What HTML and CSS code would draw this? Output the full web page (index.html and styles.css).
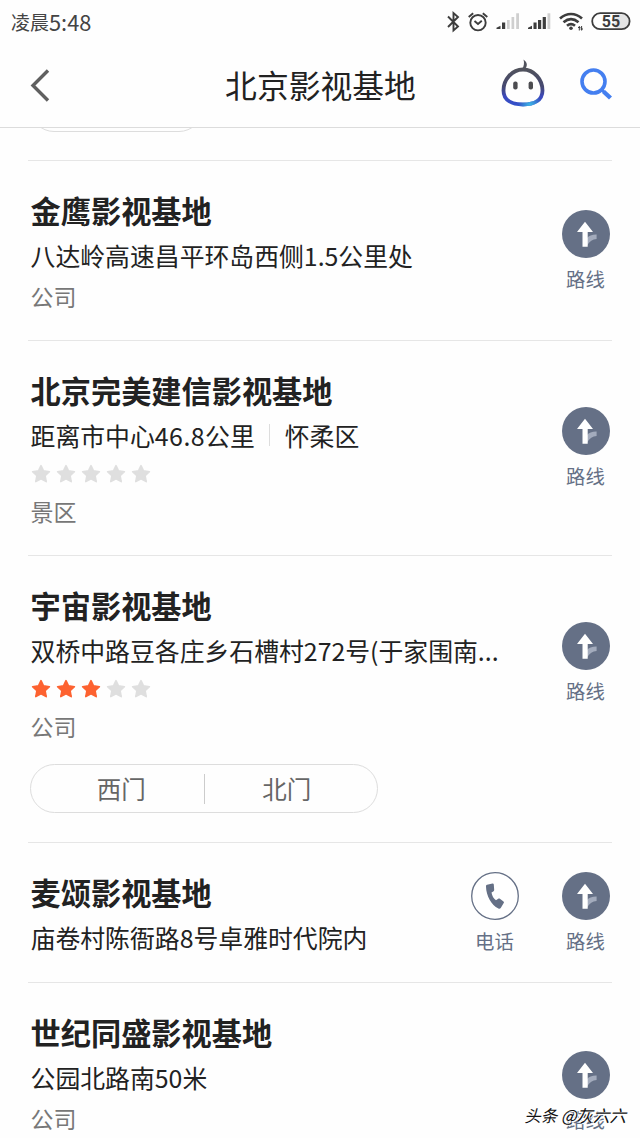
FILE: index.html
```
<!DOCTYPE html>
<html lang="zh-CN">
<head>
<meta charset="utf-8">
<title>北京影视基地</title>
<link rel="stylesheet" href="styles.css">
</head>
<body>
<svg class="defs" width="0" height="0" aria-hidden="true">
  <symbol id="star" viewBox="0 0 20 20"><path d="M10 1.600l2.500 5.300 5.900.8-4.300 4 1.100 5.900L10 14.800l-5.200 2.800 1.100-5.900-4.300-4 5.900-.8z" fill="currentColor" stroke="currentColor" stroke-width="1.600" stroke-linejoin="round"/></symbol>
  <symbol id="route" viewBox="0 0 48 48"><circle cx="24" cy="24" r="24" fill="#657086"/><path d="M25 35.500v-7.500c2-2.200 5-3.600 9.600-3.500v4.600c-4 .1-7 2.200-9.600 6.400z" fill="#a3abbc"/><path d="M23 11.700l8 10.200h-5.300v14.900h-5.200V21.900H15z" fill="#fff"/></symbol>
</svg>
<div class="screen">
  <div class="status">
    <span class="time">凌晨<span class="digits">5:48</span></span>
    <svg class="status-icons" width="190" height="30" viewBox="0 0 190 30" fill="none" stroke="#3d3d3d">
      <path d="M7 16.500l10 10-4.500 4V13l4.500 4-10 10" stroke-width="1.900"/>
      <circle cx="37" cy="22.700" r="7.700" stroke-width="1.900"/>
      <path d="M33.500 21l3.500 3 3.800-3.200M27.700 17l4.500-3.700M41.800 13.300l4.500 3.700" stroke-width="1.900"/>
      <g stroke="none" fill="#3d3d3d">
        <path d="M55.500 27.800l4-2v3.200h-4zM61 22.500h3.200v6.500H61z"/>
        <path d="M66 20h2.700v9H66zM70.500 17h2.700v12h-2.700zM75.200 13.300h2.800V29h-2.800z" fill="#cfcfcf"/>
        <path d="M87 27.800l4-2v3.200h-4zM92.500 22.500h3.100v6.500h-3.100zM97 20h3.200v9H97zM101.700 17h3.200v12h-3.200z"/>
        <path d="M106.500 13.300h2.800V29h-2.800z" fill="#cfcfcf"/>
      </g>
      <path d="M119 18.500c6.800-6 15.200-6 22 0M122.500 22.300c4.800-4 10.200-4 15 0M126 25.800c2.700-2.200 5.300-2.200 8 0" stroke-width="2.700"/>
      <circle cx="130" cy="28.300" r="1.800" fill="#3d3d3d" stroke="none"/>
      <path d="M138.300 26v4.500M140.600 26v4.500M137 27.500h2.500M139.500 29h2.500" stroke-width="1"/>
      <path d="M174 14.200h7a7.200 7.200 0 0 1 0 14.400h-7z" fill="#e4e4e4" stroke="none"/>
      <rect x="151.200" y="13.200" width="37.400" height="16" rx="8" stroke-width="1.800"/>
      <text x="170" y="27" text-anchor="middle" class="battery">55</text>
    </svg>
  </div>
  <header class="header">
    <svg class="back" width="24" height="36" viewBox="0 0 24 36" fill="none" stroke="#606060" stroke-width="3.400"><path d="M20 4.500L5 19.500l15 15"/></svg>
    <h1 class="heading">北京影视基地</h1>
    <div class="tools">
      <svg width="46" height="50" viewBox="0 0 46 50" fill="none">
        <defs><linearGradient id="face" x1="0" y1="0" x2="0" y2="1"><stop offset="0" stop-color="#50525c"/><stop offset=".5" stop-color="#454872"/><stop offset=".78" stop-color="#3c48bd"/><stop offset="1" stop-color="#3350c8"/></linearGradient>
        <radialGradient id="glow" cx="30" cy="46" r="12" gradientUnits="userSpaceOnUse"><stop offset="0" stop-color="#3cb7e6"/><stop offset="1" stop-color="#3cb7e6" stop-opacity="0"/></radialGradient></defs>
        <path d="M23 10.500C12 10.500 3.500 20.500 3.500 31.500 3.500 41.500 12 45.500 23 45.500S42.500 41.500 42.500 31.500C42.500 20.500 34 10.500 23 10.500z" stroke="url(#face)" stroke-width="3.800"/>
        <path d="M23 10.500C12 10.500 3.500 20.500 3.500 31.500 3.500 41.500 12 45.500 23 45.500S42.500 41.500 42.500 31.500C42.500 20.500 34 10.500 23 10.500z" stroke="url(#glow)" stroke-width="3.800"/>
        <path d="M23.500.500c4 3 4.500 6.500 1 10h-2.500c2-3.500 2.500-6.500 1.500-10z" fill="#50525c"/>
        <rect x="13.200" y="22.500" width="4.400" height="8" rx="2" fill="#4c4c50"/><rect x="28.600" y="22.500" width="4.400" height="8" rx="2" fill="#4c4c50"/>
      </svg>
      <svg width="34" height="34" viewBox="0 0 34 34" fill="none" stroke="#447ff0"><circle cx="14.500" cy="14.500" r="11.500" stroke-width="3.600"/><path d="M22.500 22.500l3 3" stroke-width="3"/><path d="M24.500 24.500l7 6.500" stroke-width="4.400"/></svg>
    </div>
  </header>
  <main class="list">
    <div class="previous"><div class="gate-end"></div></div>
    <section class="row">
      <div class="main">
        <div class="info"><h2 class="name">金鹰影视基地</h2><p class="address">八达岭高速昌平环岛西侧1.5公里处</p><p class="category">公司</p></div>
        <div class="actions"><div class="action"><svg class="circle"><use href="#route"/></svg><span class="label">路线</span></div></div>
      </div>
    </section>
    <section class="row rated">
      <div class="main">
        <div class="info"><h2 class="name">北京完美建信影视基地</h2><p class="address">距离市中心<span class="km">46.8</span>公里<span class="divider"></span>怀柔区</p>
          <div class="stars"><svg><use href="#star"/></svg><svg><use href="#star"/></svg><svg><use href="#star"/></svg><svg><use href="#star"/></svg><svg><use href="#star"/></svg></div>
          <p class="category">景区</p></div>
        <div class="actions"><div class="action"><svg class="circle"><use href="#route"/></svg><span class="label">路线</span></div></div>
      </div>
    </section>
    <section class="row rated with-gates">
      <div class="main">
        <div class="info"><h2 class="name">宇宙影视基地</h2><p class="address">双桥中路豆各庄乡石槽村272号(于家围南...</p>
          <div class="stars"><svg class="on"><use href="#star"/></svg><svg class="on"><use href="#star"/></svg><svg class="on"><use href="#star"/></svg><svg><use href="#star"/></svg><svg><use href="#star"/></svg></div>
          <p class="category">公司</p></div>
        <div class="actions"><div class="action"><svg class="circle"><use href="#route"/></svg><span class="label">路线</span></div></div>
      </div>
      <div class="gates"><span class="gate">西门</span><span class="gate">北门</span></div>
    </section>
    <section class="row brief">
      <div class="main">
        <div class="info"><h2 class="name">麦颂影视基地</h2><p class="address">庙卷村陈衙路8号卓雅时代院内</p></div>
        <div class="actions">
          <div class="action"><svg class="circle" viewBox="0 0 48 48"><circle cx="24" cy="24" r="23.300" fill="#fff" stroke="#657086" stroke-width="1.300"/><path d="M16 12.700l5.500-1.300c.8-.1 1.200.3 1.300 1l.4 5.600c0 .7-.3 1.100-.9 1.400l-1.800 1c.5 3.400 2 5.800 4.500 7.800l2.200-1.500c.6-.4 1.100-.4 1.700 0l3.600 2.800c.6.5.6 1 .2 1.600l-2.800 4.600c-.7 1-1.500 1.200-2.500.7C20.300 33 15.300 24 15 14.700c0-1 .1-1.700 1-2z" fill="#657086"/></svg><span class="label">电话</span></div>
          <div class="action"><svg class="circle"><use href="#route"/></svg><span class="label">路线</span></div>
        </div>
      </div>
    </section>
    <section class="row last">
      <div class="main">
        <div class="info"><h2 class="name">世纪同盛影视基地</h2><p class="address">公园北路南50米</p><p class="category">公司</p></div>
        <div class="actions"><div class="action"><svg class="circle"><use href="#route"/></svg><span class="label">路线</span></div></div>
      </div>
    </section>
  </main>
  <div class="watermark">头条 @灰六六</div>
</div>
</body>
</html>
```
FILE: styles.css
```
* { box-sizing: border-box; margin: 0; padding: 0; }
body { background: #fff; font-family: "Noto Sans CJK SC", sans-serif; color: #222; }
svg { display: block; flex: none; }
.defs { position: absolute; }
.screen { position: relative; width: 640px; height: 1138px; overflow: hidden; display: flex; flex-direction: column; background: #fefefe; }
.status { height: 42px; flex: none; padding: 0 9px 0 11px; display: flex; justify-content: space-between; align-items: flex-start; }
.time { display: flex; font-size: 19px; line-height: 43px; color: #444; white-space: nowrap; }
.digits { font-size: 21.800px; }
.status-icons { overflow: visible; }
.battery { font: bold 16px Roboto, sans-serif; fill: #3d3d3d; stroke: none; }
.header { height: 86px; flex: none; border-bottom: 1px solid #dcdcdc; padding: 0 27px 1px 28px; display: grid; grid-template-columns: 1fr auto 1fr; align-items: center; }
.heading { font-size: 31.800px; font-weight: 400; line-height: 44px; white-space: nowrap; color: #222; }
.tools { display: flex; justify-content: flex-end; align-items: center; gap: 33px; }
.list { flex: 1; min-height: 0; overflow: hidden; }
.previous { height: 32px; padding-left: 30px; overflow: hidden; }
.gate-end { width: 173px; height: 48px; margin-top: -44px; border: 1px solid #ddd; border-radius: 24px; }
.row { margin: 0 28px; border-top: 1px solid #e6e6e6; }
.main { display: flex; justify-content: space-between; height: 179px; padding: 0 2px 0 2.600px; }
.rated .main { height: 214px; }
.brief .main { height: 139px; }
.last .main { height: 217px; }
.info { padding-top: 29px; white-space: nowrap; }
.name { font-size: 30.200px; font-weight: 700; line-height: 40px; }
.address { display: flex; align-items: center; margin-top: 7px; font-size: 24.850px; line-height: 36px; }
.km { letter-spacing: .5px; }
.category { margin-top: 7px; font-size: 23px; line-height: 32px; color: #777; }
.divider { width: 1px; height: 22px; margin: 0 15px 0 14px; background: #ddd; }
.stars { display: flex; gap: 5px; margin-top: 11px; }
.stars + .category { margin-top: 11px; }
.stars svg { width: 20px; height: 20px; color: #dfdfdf; }
.stars .on { color: #fd6230; }
.actions { display: flex; gap: 43px; align-self: center; padding-top: 1px; }
.action { display: flex; flex-direction: column; align-items: center; width: 48px; }
.circle { width: 48px; height: 48px; }
.label { margin: 7px 1px 0 0; font-size: 19.400px; line-height: 28px; color: #657086; white-space: nowrap; }
.with-gates { padding-bottom: 29px; }
.gates { display: flex; align-items: center; width: 348px; height: 49px; margin: -6px 0 0 2px; border: 1px solid #ddd; border-radius: 25px; }
.gate { flex: 1; text-align: center; font-size: 24.500px; line-height: 30px; color: #666; padding-left: 8px; }
.gate + .gate { border-left: 1px solid #ccc; padding: 0 8px 0 0; }
.watermark { position: absolute; right: 14px; top: 1101px; font-size: 16.500px; line-height: 28px; font-style: italic; color: #111; white-space: nowrap; text-shadow: 1px 1px 0 #fff, -1px -1px 0 #fff; }
```
